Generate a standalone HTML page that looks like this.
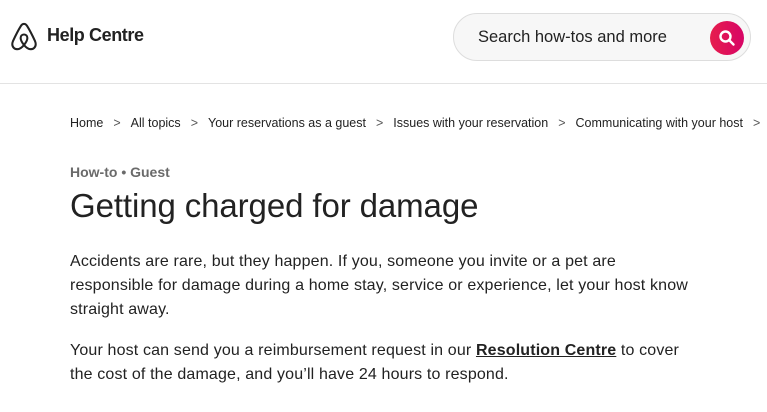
<!DOCTYPE html>
<html><head><style>
body{margin:0;width:767px;height:412px;overflow:hidden;background:#fff;font-family:"Liberation Sans",Arial,sans-serif;color:#222;}
.hdr{position:absolute;left:0;top:0;width:767px;height:83px;border-bottom:1px solid #e3e3e3;}
.logo{position:absolute;left:9px;top:22px;}
.ht{position:absolute;left:47px;top:25px;font-size:18px;font-weight:bold;letter-spacing:-0.4px;}
.search{position:absolute;left:453px;top:13px;width:298px;height:48px;border:1px solid #ddd;border-radius:25px;background:#f7f7f7;box-sizing:border-box;}
.search span{position:absolute;left:24px;top:14px;font-size:16.5px;color:#222;}
.btn{position:absolute;left:256px;top:7px;width:34px;height:34px;border-radius:50%;background:linear-gradient(90deg,#e61e4d,#d70466);}
.bc{position:absolute;left:70px;top:116px;font-size:12.5px;white-space:nowrap;color:#222;}
.bc i{font-style:normal;color:#555;margin:0 10px;}
.cat{position:absolute;left:70px;top:164px;font-size:14px;color:#6a6a6a;font-weight:bold;}
h1{position:absolute;left:70px;top:187px;margin:0;font-size:33px;font-weight:normal;letter-spacing:-0.1px;color:#222;}
p{position:absolute;left:70px;margin:0;width:630px;font-size:16px;line-height:24px;color:#222;letter-spacing:0.15px;}
a{color:#222;font-weight:bold;text-decoration:underline;}
</style></head><body>
<div class="hdr">
<svg class="logo" width="30" height="30" viewBox="0 0 32 32"><path d="M16 24.5c-2.3 2.9-4.7 4.5-7.3 4.5-3 0-5.2-2.3-5.2-5.4 0-1 .2-1.9.7-3.1C6.7 15 9.5 9.3 12.7 4.2 13.6 2.7 14.6 2 16 2s2.4.7 3.3 2.2c3.2 5.1 6 10.8 8.5 16.3.5 1.2.7 2.1.7 3.1 0 3.1-2.2 5.4-5.2 5.4-2.6 0-5-1.6-7.3-4.5zm0 0c2.3-2.9 3.6-5.4 3.6-7.5 0-2.2-1.5-3.7-3.6-3.7s-3.6 1.5-3.6 3.7c0 2.1 1.3 4.6 3.6 7.5z" fill="none" stroke="#222" stroke-width="2.2"/></svg>
<div class="ht">Help Centre</div>
<div class="search"><span>Search how-tos and more</span>
<div class="btn"><svg width="34" height="34" viewBox="0 0 34 34"><circle cx="15.5" cy="15.5" r="5" fill="none" stroke="#fff" stroke-width="2.4"/><path d="M19 19l4.5 4.5" stroke="#fff" stroke-width="2.4" stroke-linecap="round"/></svg></div></div>
</div>
<div class="bc">Home<i>&gt;</i>All topics<i>&gt;</i>Your reservations as a guest<i>&gt;</i>Issues with your reservation<i>&gt;</i>Communicating with your host<i>&gt;</i></div>
<div class="cat">How-to • Guest</div>
<h1>Getting charged for damage</h1>
<p style="top:250px">Accidents are rare, but they happen. If you, someone you invite or a pet are<br>responsible for damage during a home stay, service or experience, let your host know straight away.</p>
<p style="top:339px">Your host can send you a reimbursement request in our <a>Resolution Centre</a> to cover the cost of the damage, and you’ll have 24 hours to respond.</p>
</body></html>
